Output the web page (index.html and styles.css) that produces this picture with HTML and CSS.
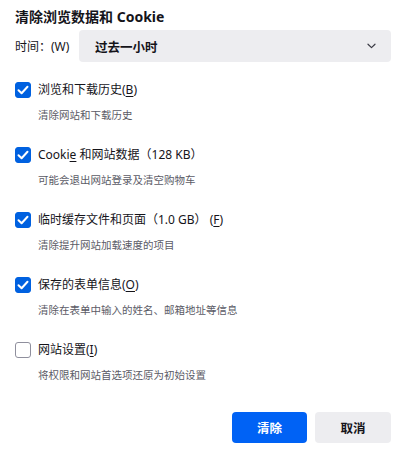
FILE: index.html
```html
<!DOCTYPE html>
<html lang="zh-CN">
<head>
<meta charset="utf-8">
<link rel="stylesheet" href="styles.css">
</head>
<body>
<div class="dialog">
  <h1 class="title">清除浏览数据和 Cookie</h1>
  <div class="range-row">
    <span class="range-label">时间：(W)</span>
    <div class="select">
      <span class="select-value">过去一小时</span>
      <svg class="chevron" width="9" height="6" viewBox="0 0 9 6"><path d="M1 1.2 L4.5 4.6 L8 1.2" fill="none" stroke="#3a3a44" stroke-width="1.2" stroke-linecap="round" stroke-linejoin="round"/></svg>
    </div>
  </div>
  <div class="items">
    <div class="item">
      <div class="row">
        <span class="box checked"><svg width="12" height="10" viewBox="0 0 12 10"><path d="M1.5 5.2 L4.6 8.2 L10.5 1.8" fill="none" stroke="#fff" stroke-width="2" stroke-linecap="round" stroke-linejoin="round"/></svg></span>
        <span class="label">浏览和下载历史(<u>B</u>)</span>
      </div>
      <div class="desc">清除网站和下载历史</div>
    </div>
    <div class="item">
      <div class="row">
        <span class="box checked"><svg width="12" height="10" viewBox="0 0 12 10"><path d="M1.5 5.2 L4.6 8.2 L10.5 1.8" fill="none" stroke="#fff" stroke-width="2" stroke-linecap="round" stroke-linejoin="round"/></svg></span>
        <span class="label">Cooki<u>e</u> 和网站数据（128 KB）</span>
      </div>
      <div class="desc">可能会退出网站登录及清空购物车</div>
    </div>
    <div class="item">
      <div class="row">
        <span class="box checked"><svg width="12" height="10" viewBox="0 0 12 10"><path d="M1.5 5.2 L4.6 8.2 L10.5 1.8" fill="none" stroke="#fff" stroke-width="2" stroke-linecap="round" stroke-linejoin="round"/></svg></span>
        <span class="label">临时缓存文件和页面（1.0 GB） (<u>F</u>)</span>
      </div>
      <div class="desc">清除提升网站加载速度的项目</div>
    </div>
    <div class="item">
      <div class="row">
        <span class="box checked"><svg width="12" height="10" viewBox="0 0 12 10"><path d="M1.5 5.2 L4.6 8.2 L10.5 1.8" fill="none" stroke="#fff" stroke-width="2" stroke-linecap="round" stroke-linejoin="round"/></svg></span>
        <span class="label">保存的表单信息(<u>O</u>)</span>
      </div>
      <div class="desc">清除在表单中输入的姓名、邮箱地址等信息</div>
    </div>
    <div class="item">
      <div class="row">
        <span class="box"></span>
        <span class="label">网站设置(<u>I</u>)</span>
      </div>
      <div class="desc">将权限和网站首选项还原为初始设置</div>
    </div>
  </div>
  <div class="buttons">
    <button class="btn primary">清除</button>
    <button class="btn secondary">取消</button>
  </div>
</div>
</body>
</html>
```
FILE: styles.css
```css
* { box-sizing: border-box; }
html, body { margin: 0; padding: 0; background: #fff; }
body {
  font-family: "Noto Sans", "Noto Sans CJK SC", sans-serif;
  color: #15141a;
  width: 402px;
  height: 453px;
  overflow: hidden;
}
.dialog {
  padding: 7px 11px 0 15px;
  display: flex;
  flex-direction: column;
}
.title {
  margin: 0;
  font-size: 14px;
  font-weight: 700;
  line-height: 19px;
}
.range-row {
  margin-top: 4px;
  display: flex;
  align-items: center;
}
.range-label {
  font-size: 12px;
  width: 64px;
  flex: none;
}
.select {
  flex: 1;
  height: 32px;
  background: #ededf0;
  border-radius: 4px;
  display: flex;
  align-items: center;
  justify-content: space-between;
  padding: 0 15px 0 16px;
}
.select-value {
  font-size: 12.5px;
  font-weight: 700;
}
.chevron { display: block; }
.items {
  margin-top: 20px;
  display: flex;
  flex-direction: column;
  gap: 24px;
}
.item {
  display: flex;
  flex-direction: column;
  gap: 9px;
}
.row {
  display: flex;
  align-items: center;
  height: 16px;
  gap: 7px;
}
.box {
  width: 16px;
  height: 16px;
  border-radius: 3px;
  border: 1.5px solid #8f8f9d;
  background: #fff;
  display: flex;
  align-items: center;
  justify-content: center;
  flex: none;
}
.box.checked {
  background: #0061e0;
  border-color: #0061e0;
}
.box svg { display: block; }
.label {
  font-size: 12px;
  line-height: 16px;
}
.label u { text-underline-offset: 2px; }
.desc {
  padding-left: 23px;
  font-size: 10.5px;
  line-height: 16px;
  color: #5b5b66;
}
.buttons {
  margin-top: 29px;
  display: flex;
  justify-content: flex-end;
  gap: 8px;
}
.btn {
  height: 31px;
  border: none;
  border-radius: 4px;
  font-family: "Noto Sans", "Noto Sans CJK SC", sans-serif;
  font-size: 12.5px;
  font-weight: 700;
  padding: 0;
}
.primary {
  width: 75px;
  background: #0062f5;
  color: #fff;
}
.secondary {
  width: 76px;
  background: #ededf0;
  color: #15141a;
}
```
